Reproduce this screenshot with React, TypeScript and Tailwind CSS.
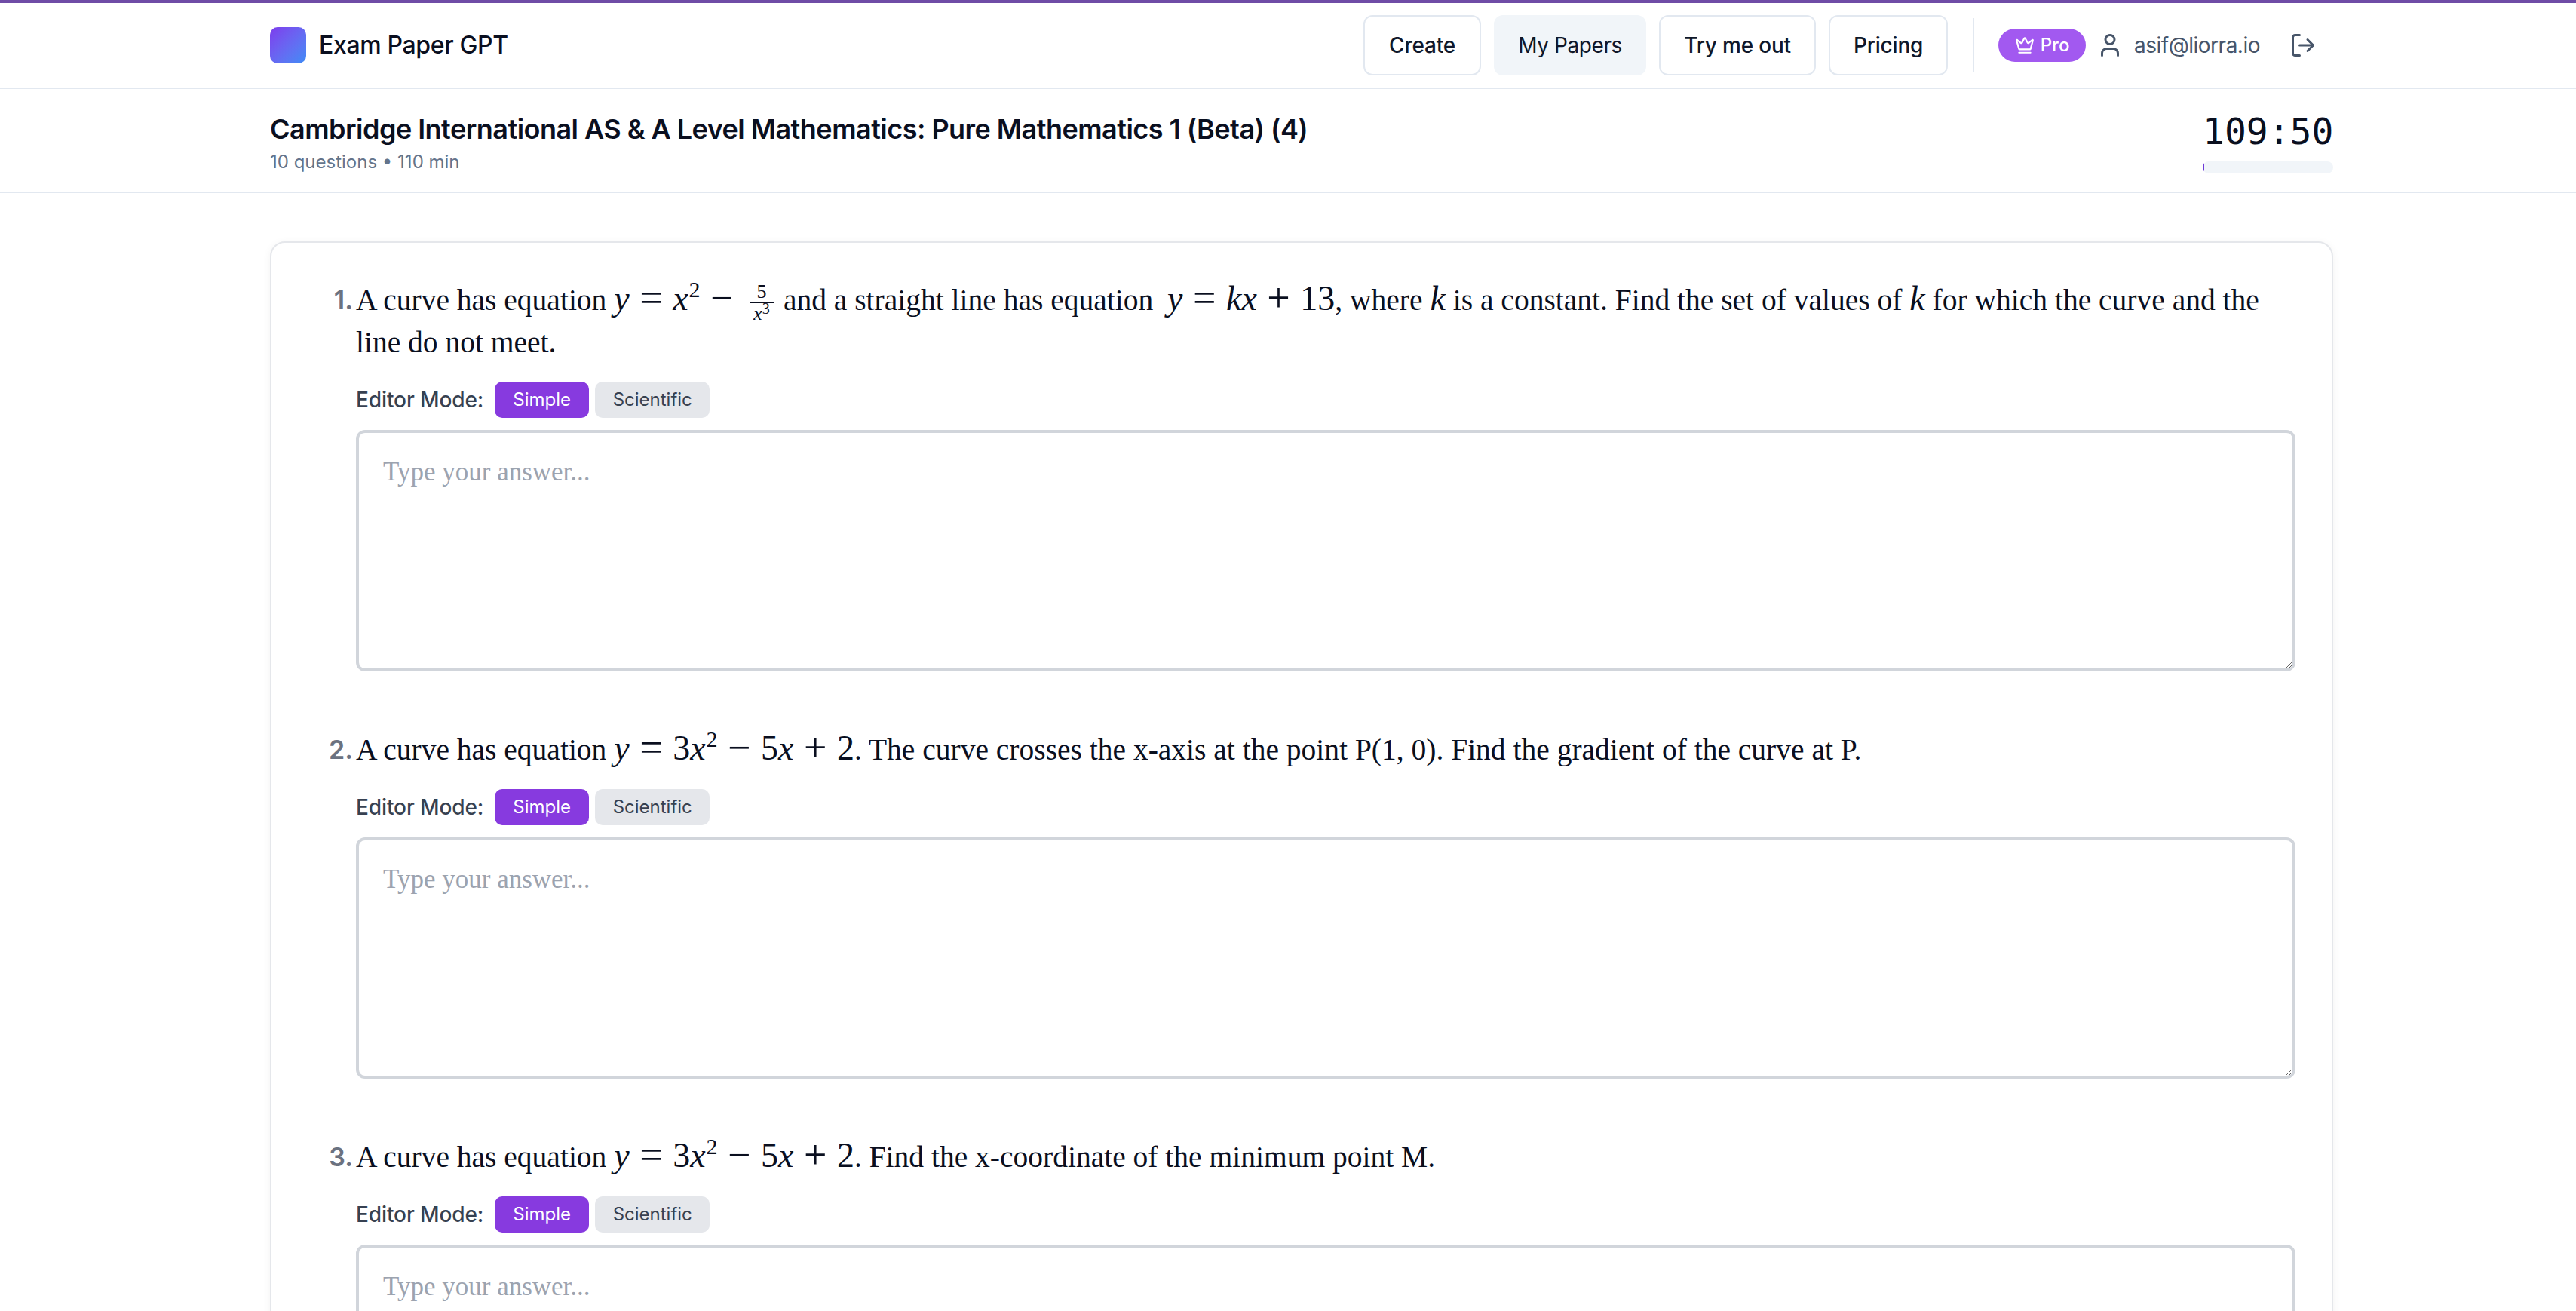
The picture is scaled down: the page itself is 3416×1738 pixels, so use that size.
import { Crown, User, LogOut } from "lucide-react";
import type { ReactNode } from "react";

const sans = "font-['Inter','Noto_Sans',sans-serif]";

function V({ children, className = "" }: { children: ReactNode; className?: string }) {
  return <span className={`font-['Liberation_Serif',serif] italic text-[46px] leading-[0] ${className}`}>{children}</span>;
}
function N({ children }: { children: ReactNode }) {
  return <span className="font-['Liberation_Serif',serif] text-[46px] leading-[0]">{children}</span>;
}
function Op({ children }: { children: ReactNode }) {
  return <span className="font-['Liberation_Serif',serif] text-[54px] leading-[0] mx-[13.5px] relative top-[2px]">{children}</span>;
}
function Sup({ children }: { children: ReactNode }) {
  return <span className="font-['Liberation_Serif',serif] text-[30px] leading-[0] relative -top-[17px] ml-[1px]">{children}</span>;
}
function NavButton({ children, active, w }: { children: ReactNode; active?: boolean; w: string }) {
  return (
    <button className={`${w} h-[80px] rounded-[12px] text-[28px] tracking-[-0.2px] font-medium text-[#0f172a] border-2 ${active ? "bg-[#f1f5f9] border-[#f1f5f9] font-normal tracking-[-0.4px]" : "bg-white border-[#e2e8f0]"}`}>
      {children}
    </button>
  );
}

function Question({ n, children }: { n: number; children: ReactNode }) {
  return (
    <div className="flex gap-[4px] mb-[76px]">
      <div className={`${sans} w-[60px] shrink-0 text-right text-[34px] leading-[56px] font-semibold text-[#6b7280]`}>{n}.</div>
      <div className="flex-1 min-w-0">
        <p className="font-['Liberation_Serif',serif] text-[39.5px] leading-[56px] text-[#0a0f1f] whitespace-nowrap">{children}</p>
        <div className={`${sans} mt-[24px] flex items-center h-[48px] text-[28px] text-[#374151]`}>
          <span className="font-medium mr-[15px] text-[28px] tracking-[-0.1px]">Editor Mode:</span>
          <button className="h-[48px] w-[125px] rounded-[10px] bg-[#873adf] text-white text-[24px]">Simple</button>
          <button className="h-[48px] w-[152px] ml-[8px] rounded-[10px] bg-[#e5e7eb] text-[#374151] text-[24px]">Scientific</button>
        </div>
        <textarea
          placeholder="Type your answer..."
          className="mt-[16px] block w-full h-[320px] rounded-[12px] border-4 border-[#d1d5db] bg-white px-[32px] py-[27px] font-['Liberation_Serif',serif] text-[35px] leading-[50px] placeholder:text-[#9ca3af]"
        />
      </div>
    </div>
  );
}

export default function App() {
  return (
    <div className={`${sans} h-screen overflow-hidden bg-white text-[#0f172a]`}>
      <div className="h-[4px] bg-[#6f4ca6]" />
      <nav className="h-[114px] border-b-2 border-[#e2e8f0] pl-[358px] pr-[322px] flex items-center justify-between">
        <div className="flex items-center gap-[17px]">
          <div className="w-[48px] h-[48px] rounded-[10px] bg-gradient-to-br from-[#7c3aed] to-[#3b8bf6]" />
          <span className="text-[32px] font-medium tracking-[-0.35px] text-[#0a0f1f]">Exam Paper GPT</span>
        </div>
        <div className="flex items-center">
          <div className="flex items-center gap-[17px]">
            <NavButton w="w-[156px]">Create</NavButton>
            <NavButton w="w-[202px]" active>My Papers</NavButton>
            <NavButton w="w-[208px]">Try me out</NavButton>
            <NavButton w="w-[158px]">Pricing</NavButton>
          </div>
          <div className="w-[2px] h-[72px] bg-[#e2e8f0] ml-[33px] mr-[32px]" />
          <div className="flex items-center h-[44px] w-[116px] justify-center gap-[8px] rounded-full bg-[#a259f0] text-white text-[24px] font-medium">
            <Crown size={26} strokeWidth={2} />
            Pro
          </div>
          <User size={36} strokeWidth={2} className="ml-[14px] text-[#475569]" />
          <span className="ml-[14px] text-[28px] tracking-[-0.5px] text-[#475569]">asif@liorra.io</span>
          <LogOut size={36} strokeWidth={2} className="ml-[39px] mr-[22px] text-[#475569]" />
        </div>
      </nav>
      <header className="h-[138px] border-b-2 border-[#e2e8f0] pl-[358px] pr-[322px] flex items-start justify-between">
        <div className="pt-[29px]">
          <h1 className="text-[36px] leading-[48px] font-semibold tracking-[-0.53px] text-[#0a0f1f]">Cambridge International AS &amp; A Level Mathematics: Pure Mathematics 1 (Beta) (4)</h1>
          <p className="mt-[4px] text-[24px] leading-[32px] text-[#64748b]">10 questions • 110 min</p>
        </div>
        <div className="pt-[28px] w-[173px]">
          <div className="font-['DejaVu_Sans_Mono',monospace] text-[48px] leading-[56px] text-right text-[#0a0f1f]">109:50</div>
          <div className="mt-[12px] h-[16px] rounded-full bg-[#f1f5f9] overflow-hidden">
            <div className="w-[2px] h-full bg-[#6d3ad8]" />
          </div>
        </div>
      </header>
      <main className="pt-[64px] pl-[358px] pr-[322px]">
        <section className="rounded-[20px] border-2 border-[#e5e7eb] bg-white shadow-[0_2px_12px_rgba(15,23,42,0.05)] pt-[48px] pl-[48px] pr-[48px]">
          <Question n={1}>
            A curve has equation <V>y</V><Op>=</Op><V>x</V><Sup>2</Sup><Op>−</Op>
            <span className="inline-flex flex-col items-center w-[32px] ml-[8px] mr-[3px] -my-[16px] align-[16px] font-['Liberation_Serif',serif] text-[26px] leading-[24px]">
              <span className="w-full text-center pb-[1px] border-b-2 border-[#0a0f1f]">5</span>
              <span className="leading-[28px]"><i>x</i><span className="text-[20px] relative -top-[8px]">3</span></span>
            </span>{" "}
            and a straight line has equation <V className="ml-[9px]">y</V><Op>=</Op><V>kx</V><Op>+</Op><N>13</N>, where <V>k</V> is a constant. Find the set of values of <V>k</V> for which the curve and the
            <br />
            line do not meet.
          </Question>
          <Question n={2}>
            A curve has equation <V>y</V><Op>=</Op><N>3</N><V>x</V><Sup>2</Sup><Op>−</Op><N>5</N><V>x</V><Op>+</Op><N>2</N>. The curve crosses the x-axis at the point P(1, 0). Find the gradient of the curve at P.
          </Question>
          <Question n={3}>
            A curve has equation <V>y</V><Op>=</Op><N>3</N><V>x</V><Sup>2</Sup><Op>−</Op><N>5</N><V>x</V><Op>+</Op><N>2</N>. Find the x-coordinate of the minimum point M.
          </Question>
        </section>
      </main>
    </div>
  );
}
